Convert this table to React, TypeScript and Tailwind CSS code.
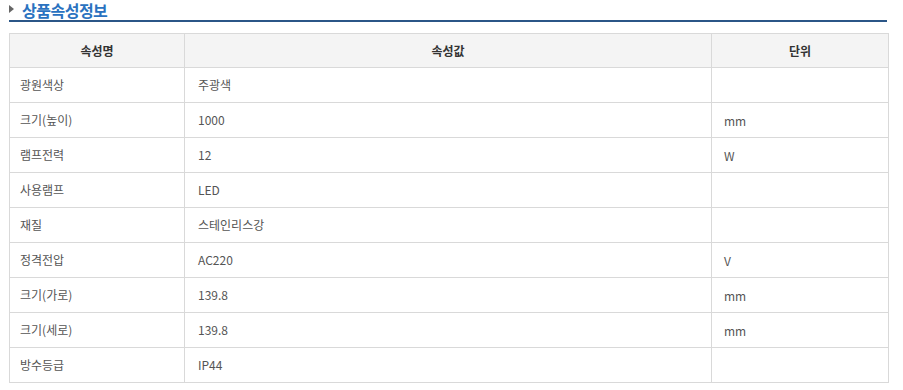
import React from 'react'

const rows: [string, string, string][] = [
  ['광원색상', '주광색', ''],
  ['크기(높이)', '1000', 'mm'],
  ['램프전력', '12', 'W'],
  ['사용램프', 'LED', ''],
  ['재질', '스테인리스강', ''],
  ['정격전압', 'AC220', 'V'],
  ['크기(가로)', '139.8', 'mm'],
  ['크기(세로)', '139.8', 'mm'],
  ['방수등급', 'IP44', ''],
]

export default function App() {
  return (
    <div
      className="w-[903px] h-[390px] bg-white overflow-hidden"
      style={{ fontFamily: '"Noto Sans CJK KR", "Noto Sans", sans-serif' }}
    >
      <div className="ml-[9px] w-[878px]">
        {/* title */}
        <div className="h-[22px] border-b-2 border-[#2b5687] flex items-center">
          <span className="mt-[-3px] w-0 h-0 border-y-[4px] border-y-transparent border-l-[5px] border-l-[#666]" />
          <h2 className="ml-[8px] text-[16px] leading-[20px] tracking-[-0.5px] font-bold text-[#2a72c0]">상품속성정보</h2>
        </div>

        <table className="mt-[11px] w-[879px] border-collapse table-fixed text-[12px]">
          <colgroup>
            <col className="w-[175px]" />
            <col className="w-[527px]" />
            <col className="w-[177px]" />
          </colgroup>
          <thead>
            <tr className="h-[34px] bg-[#f4f4f4]">
              <th className="border border-[#d9d9d9] font-bold text-[#333] text-center">속성명</th>
              <th className="border border-[#d9d9d9] font-bold text-[#333] text-center">속성값</th>
              <th className="border border-[#d9d9d9] font-bold text-[#333] text-center">단위</th>
            </tr>
          </thead>
          <tbody>
            {rows.map(([name, value, unit]) => (
              <tr key={name} className="h-[35px]">
                <td className="border border-[#d9d9d9] pl-[10px] text-[#555]">{name}</td>
                <td className="border border-[#d9d9d9] pl-[13px] text-[#555]">{value}</td>
                <td className="border border-[#d9d9d9] pl-[12px] text-[#555] pt-[1px]">{unit}</td>
              </tr>
            ))}
          </tbody>
        </table>
      </div>
    </div>
  )
}
